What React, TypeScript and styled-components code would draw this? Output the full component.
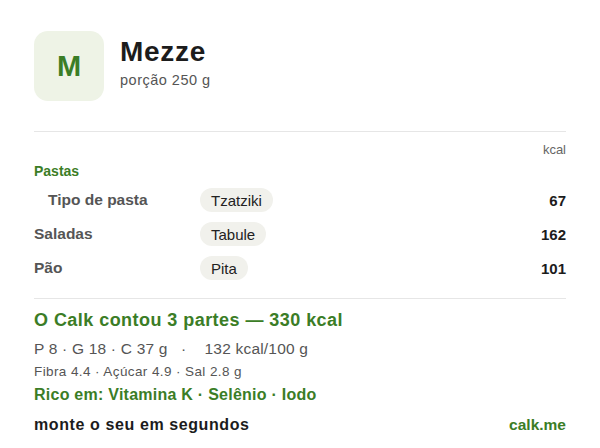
import React from "react";
import styled, { createGlobalStyle } from "styled-components";

const Global = createGlobalStyle`
  html, body { margin: 0; padding: 0; background: #ffffff; }
  body { font-family: "Liberation Sans", Arial, sans-serif; }
`;

const Card = styled.div`
  width: 600px;
  height: 448px;
  box-sizing: border-box;
  padding: 31px 34px 0 34px;
  background: #fff;
  overflow: hidden;
`;

const Header = styled.div`
  display: flex;
  align-items: flex-start;
  gap: 16px;
`;

const Avatar = styled.div`
  width: 70px;
  height: 70px;
  border-radius: 14px;
  background: #eef3e6;
  display: flex;
  align-items: center;
  justify-content: center;
  color: #3b7d26;
  font-weight: 700;
  font-size: 29px;
`;

const TitleBlock = styled.div`
  display: flex;
  flex-direction: column;
  padding-top: 5px;
`;

const Title = styled.div`
  font-size: 28px;
  font-weight: 700;
  letter-spacing: 0.7px;
  color: #1c1c1c;
  line-height: 31px;
`;

const Subtitle = styled.div`
  font-size: 14.5px;
  letter-spacing: 0.5px;
  color: #555;
  line-height: 18px;
  margin-top: 4px;
`;

const Divider = styled.hr<{ $top: number; $bottom: number }>`
  border: none;
  border-top: 1px solid #e6e6e6;
  margin: ${(p) => p.$top}px 0 ${(p) => p.$bottom}px 0;
`;

const UnitRow = styled.div`
  text-align: right;
  font-size: 13px;
  color: #666;
  line-height: 16px;
`;

const Group = styled.div`
  font-size: 14px;
  font-weight: 700;
  color: #3b7d26;
  line-height: 16px;
  margin-top: 5px;
`;

const Rows = styled.div`
  display: grid;
  grid-template-columns: 166px 1fr auto;
  grid-auto-rows: 34px;
  align-items: center;
  margin-top: 4px;
`;

const Label = styled.div<{ $indent?: boolean }>`
  font-size: 15.5px;
  font-weight: 700;
  color: #555;
  padding-left: ${(p) => (p.$indent ? 14 : 0)}px;
`;

const PillCell = styled.div`
  display: flex;
`;

const Pill = styled.span`
  display: inline-flex;
  align-items: center;
  height: 24px;
  padding: 0 11px;
  border-radius: 12px;
  background: #f1f1ec;
  font-size: 15px;
  color: #222;
`;

const Kcal = styled.div`
  font-size: 15px;
  font-weight: 700;
  color: #1c1c1c;
  text-align: right;
`;

const Summary = styled.div`
  font-size: 18px;
  font-weight: 700;
  letter-spacing: 0.45px;
  color: #3b7d26;
  line-height: 22px;
`;

const Macros = styled.div`
  font-size: 15.5px;
  letter-spacing: 0.2px;
  color: #555;
  line-height: 18px;
  margin-top: 9px;
  white-space: pre;
`;

const Minor = styled.div`
  font-size: 13.5px;
  letter-spacing: 0.4px;
  color: #555;
  line-height: 16px;
  margin-top: 6px;
`;

const Rich = styled.div`
  font-size: 16px;
  font-weight: 700;
  letter-spacing: 0.25px;
  color: #3b7d26;
  line-height: 19px;
  margin-top: 5px;
`;

const Footer = styled.div`
  display: flex;
  justify-content: space-between;
  align-items: baseline;
  margin-top: 11px;
  line-height: 19px;
`;

const Cta = styled.div`
  font-size: 16px;
  font-weight: 700;
  letter-spacing: 0.6px;
  color: #1c1c1c;
`;

const Brand = styled.div`
  font-size: 15.5px;
  font-weight: 700;
  color: #3b7d26;
`;

const items = [
  { label: "Tipo de pasta", indent: true, pill: "Tzatziki", kcal: 67 },
  { label: "Saladas", indent: false, pill: "Tabule", kcal: 162 },
  { label: "Pão", indent: false, pill: "Pita", kcal: 101 },
];

export default function App() {
  return (
    <>
      <Global />
      <Card>
        <Header>
          <Avatar>M</Avatar>
          <TitleBlock>
            <Title>Mezze</Title>
            <Subtitle>porção 250 g</Subtitle>
          </TitleBlock>
        </Header>
        <Divider $top={30} $bottom={10} />
        <UnitRow>kcal</UnitRow>
        <Group>Pastas</Group>
        <Rows>
          {items.map((it) => (
            <React.Fragment key={it.label}>
              <Label $indent={it.indent}>{it.label}</Label>
              <PillCell>
                <Pill>{it.pill}</Pill>
              </PillCell>
              <Kcal>{it.kcal}</Kcal>
            </React.Fragment>
          ))}
        </Rows>
        <Divider $top={13} $bottom={10} />
        <Summary>O Calk contou 3 partes — 330 kcal</Summary>
        <Macros>{"P 8 · G 18 · C 37 g   ·    132 kcal/100 g"}</Macros>
        <Minor>Fibra 4.4 · Açúcar 4.9 · Sal 2.8 g</Minor>
        <Rich>Rico em: Vitamina K · Selênio · Iodo</Rich>
        <Footer>
          <Cta>monte o seu em segundos</Cta>
          <Brand>calk.me</Brand>
        </Footer>
      </Card>
    </>
  );
}
